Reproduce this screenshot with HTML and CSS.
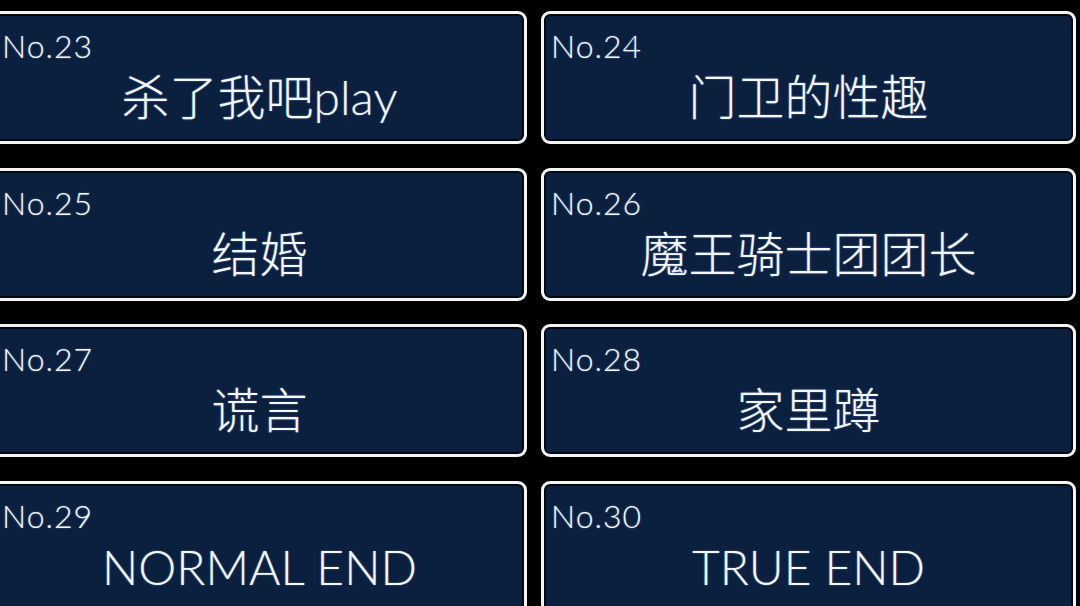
FILE: index.html
```html
<!DOCTYPE html>
<html lang="zh-CN">
<head>
<meta charset="utf-8">
<title>回想</title>
<link rel="stylesheet" href="styles.css">
</head>
<body>
<main class="scene-list">
  <div class="scene-card">
    <span class="scene-no">No.23</span>
    <span class="scene-title">杀了我吧play</span>
  </div>
  <div class="scene-card">
    <span class="scene-no">No.24</span>
    <span class="scene-title">门卫的性趣</span>
  </div>
  <div class="scene-card">
    <span class="scene-no">No.25</span>
    <span class="scene-title">结婚</span>
  </div>
  <div class="scene-card">
    <span class="scene-no">No.26</span>
    <span class="scene-title">魔王骑士团团长</span>
  </div>
  <div class="scene-card">
    <span class="scene-no">No.27</span>
    <span class="scene-title">谎言</span>
  </div>
  <div class="scene-card">
    <span class="scene-no">No.28</span>
    <span class="scene-title">家里蹲</span>
  </div>
  <div class="scene-card">
    <span class="scene-no">No.29</span>
    <span class="scene-title">NORMAL END</span>
  </div>
  <div class="scene-card">
    <span class="scene-no">No.30</span>
    <span class="scene-title">TRUE END</span>
  </div>
</main>
</body>
</html>
```

FILE: styles.css
```css
html, body {
  margin: 0;
  padding: 0;
  background: #000;
  overflow: hidden;
}

body {
  width: 1080px;
  height: 606px;
  font-family: "Lato", "Noto Sans CJK SC", sans-serif;
  font-weight: 300;
  color: #f4f7fb;
}

.scene-list {
  display: grid;
  grid-template-columns: 535px 535px;
  grid-auto-rows: 133px;
  column-gap: 14px;
  row-gap: 23.5px;
  margin-left: -8px;
  padding-top: 11px;
}

/* white frame, thin dark inner rim, navy panel */
.scene-card {
  display: flex;
  flex-direction: column;
  box-sizing: border-box;
  border: 3.5px solid #f4f4f4;
  border-radius: 9px;
  background: #0b1f3f;
  box-shadow: inset 0 0 0 2px #03080f;
  padding: 14px 7px 0 7px;
  text-shadow: 0 0 2px rgba(140, 180, 230, 0.6);
}

.scene-no {
  font-size: 32px;
  line-height: 36px;
  letter-spacing: 1px;
}

.scene-title {
  margin-top: 5px;
  font-size: 48px;
  line-height: 56px;
  text-align: center;
}
```
